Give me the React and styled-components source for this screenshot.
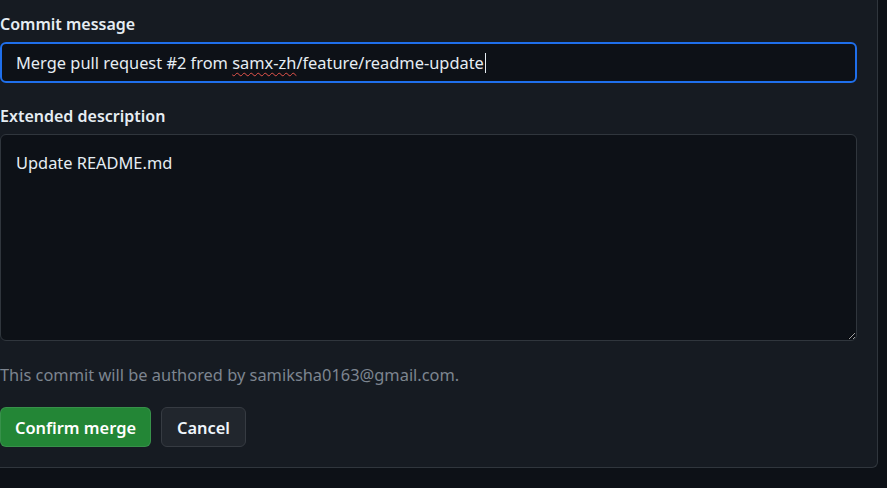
import React from "react";
import styled, { createGlobalStyle } from "styled-components";

const GlobalStyle = createGlobalStyle`
  html, body {
    margin: 0;
    padding: 0;
    background: #0d1117;
    font-family: "Noto Sans", "Liberation Sans", sans-serif;
  }
`;

const Page = styled.div`
  width: 887px;
  height: 488px;
  background: #0d1117;
  overflow: hidden;
`;

const Panel = styled.div`
  width: 857px;
  padding: 14px 20px 20px 0;
  background: #161b22;
  border-right: 1px solid #30363d;
  border-bottom: 1px solid #30363d;
  border-bottom-right-radius: 6px;
  display: flex;
  flex-direction: column;
`;

const Label = styled.div`
  font-size: 16px;
  font-weight: 600;
  color: #e6edf3;
  line-height: 20px;
  margin-bottom: ${(p) => p.$gap || 8}px;
`;

const MessageInput = styled.div`
  height: 37px;
  border: 2px solid #1f6feb;
  border-radius: 6px;
  background: #0d1117;
  color: #e6edf3;
  font-size: 16.4px;
  display: flex;
  align-items: center;
  padding-left: 14px;
  margin-bottom: 23px;
  white-space: pre;
`;

const Misspelled = styled.span`
  text-decoration: underline wavy #e5534b;
  text-decoration-thickness: 1px;
  text-underline-offset: 3px;
`;

const Caret = styled.span`
  display: inline-block;
  width: 1px;
  height: 20px;
  background: #e6edf3;
  margin-left: 1px;
`;

const Description = styled.textarea`
  display: block;
  box-sizing: border-box;
  width: 857px;
  height: 207px;
  margin: 0 0 24px 0;
  padding: 16px 15px;
  border: 1px solid #30363d;
  border-radius: 6px;
  background: #0d1117;
  color: #e6edf3;
  font-family: "Noto Sans", "Liberation Sans", sans-serif;
  font-size: 16.4px;
  line-height: 24px;
  color-scheme: dark;
  outline: none;
`;

const Note = styled.div`
  font-size: 16.4px;
  color: #7d8590;
  line-height: 20px;
  margin-bottom: 22px;
`;

const Actions = styled.div`
  display: flex;
  gap: 10px;
`;

const Button = styled.button`
  height: 40px;
  padding: 0 ${(p) => (p.$primary ? 14 : 15)}px;
  border-radius: 6px;
  font-family: "Noto Sans", "Liberation Sans", sans-serif;
  font-size: 16.4px;
  font-weight: 600;
  cursor: pointer;
  color: ${(p) => (p.$primary ? "#ffffff" : "#f0f6fc")};
  background: ${(p) => (p.$primary ? "#238636" : "#21262d")};
  border: 1px solid ${(p) => (p.$primary ? "rgba(240,246,252,0.1)" : "#363b42")};
`;

export default function App() {
  return (
    <Page>
      <GlobalStyle />
      <Panel>
        <Label $gap={8}>Commit message</Label>
        <MessageInput>
          Merge pull request #2 from <Misspelled>samx-zh</Misspelled>/feature/readme-update
          <Caret />
        </MessageInput>
        <Label $gap={8}>Extended description</Label>
        <Description defaultValue="Update README.md" spellCheck={false} />
        <Note>This commit will be authored by samiksha0163@gmail.com.</Note>
        <Actions>
          <Button $primary>Confirm merge</Button>
          <Button>Cancel</Button>
        </Actions>
      </Panel>
    </Page>
  );
}
